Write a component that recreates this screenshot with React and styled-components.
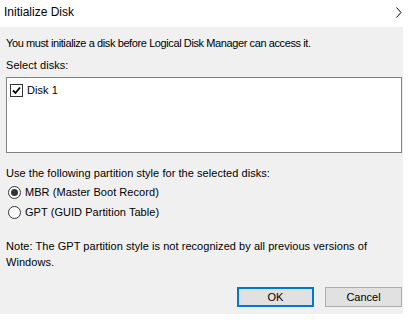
import React from 'react';
import styled, { createGlobalStyle } from 'styled-components';

const GlobalStyle = createGlobalStyle`
  html, body {
    margin: 0;
    padding: 0;
    background: #fff;
  }
`;

const Page = styled.div`
  width: 411px;
  height: 320px;
  background: #fff;
  font-family: "Liberation Sans", Arial, sans-serif;
  font-size: 11px;
  letter-spacing: 0.05px;
  color: #000;
  overflow: hidden;
`;

const TitleBar = styled.div`
  height: 24px;
  margin-bottom: 3px;
  display: flex;
  align-items: center;
  justify-content: space-between;
  padding: 0 9px 0 4px;
`;

const Title = styled.span`
  font-size: 12px;
  letter-spacing: 0;
`;

const Panel = styled.div`
  width: 403px;
  height: 287px;
  box-sizing: border-box;
  background: #f0f0f0;
  padding: 9px 1px 7px 6px;
  display: flex;
  flex-direction: column;
`;

const Line = styled.div`
  line-height: 14px;
  margin-top: ${({ $mt }) => $mt || 0}px;
  letter-spacing: ${({ $tight }) => ($tight ? '-0.4px' : 'inherit')};
`;

const ListBox = styled.div`
  margin-top: 5px;
  height: 76px;
  box-sizing: border-box;
  background: #fff;
  border: 1px solid #828282;
  padding: 5px 3px;
`;

const CheckRow = styled.label`
  display: flex;
  align-items: center;
  gap: 4px;
  line-height: 14px;
`;

const CheckBox = styled.span`
  width: 11px;
  height: 11px;
  border: 1px solid #333;
  background: #fff;
  display: flex;
  align-items: center;
  justify-content: center;
`;

const Options = styled.div`
  margin-top: 2px;
  display: flex;
  flex-direction: column;
`;

const RadioRow = styled.label`
  height: 20px;
  display: flex;
  align-items: center;
  gap: 4px;
  padding-left: 2px;
`;

const Radio = styled.span`
  width: 11px;
  height: 11px;
  border: 1px solid #333;
  border-radius: 50%;
  background: #fff;
  display: flex;
  align-items: center;
  justify-content: center;

  &::after {
    content: '';
    width: 7px;
    height: 7px;
    border-radius: 50%;
    background: ${({ $checked }) => ($checked ? '#333' : 'transparent')};
  }
`;

const Note = styled.div`
  margin-top: 16px;
  line-height: 16px;
  width: 380px;
`;

const ButtonRow = styled.div`
  margin-top: auto;
  display: flex;
  justify-content: flex-end;
  gap: 11px;
`;

const Button = styled.button`
  width: 77px;
  height: 20px;
  box-sizing: border-box;
  background: #e1e1e1;
  border: 1px solid ${({ $primary }) => ($primary ? '#0078d7' : '#adadad')};
  box-shadow: ${({ $primary }) => ($primary ? 'inset 0 0 0 1px #0078d7' : 'none')};
  font-family: inherit;
  font-size: 11px;
  letter-spacing: 0;
  color: #000;
  padding: 0;
`;

export default function App() {
  return (
    <Page>
      <GlobalStyle />
      <TitleBar>
        <Title>Initialize Disk</Title>
        <svg width="6" height="11" viewBox="0 0 6 11">
          <polyline points="0.5,0.5 5,5.5 0.5,10.5" fill="none" stroke="#000" strokeWidth="1" />
        </svg>
      </TitleBar>
      <Panel>
        <Line $tight>You must initialize a disk before Logical Disk Manager can access it.</Line>
        <Line $mt={8}>Select disks:</Line>
        <ListBox>
          <CheckRow>
            <CheckBox>
              <svg width="9" height="9" viewBox="0 0 9 9">
                <polyline points="1,4.5 3.5,7 8,1.5" fill="none" stroke="#000" strokeWidth="1.8" />
              </svg>
            </CheckBox>
            Disk 1
          </CheckRow>
        </ListBox>
        <Line $mt={13}>Use the following partition style for the selected disks:</Line>
        <Options>
          <RadioRow>
            <Radio $checked />
            MBR (Master Boot Record)
          </RadioRow>
          <RadioRow>
            <Radio />
            GPT (GUID Partition Table)
          </RadioRow>
        </Options>
        <Note>Note: The GPT partition style is not recognized by all previous versions of Windows.</Note>
        <ButtonRow>
          <Button $primary>OK</Button>
          <Button>Cancel</Button>
        </ButtonRow>
      </Panel>
    </Page>
  );
}
